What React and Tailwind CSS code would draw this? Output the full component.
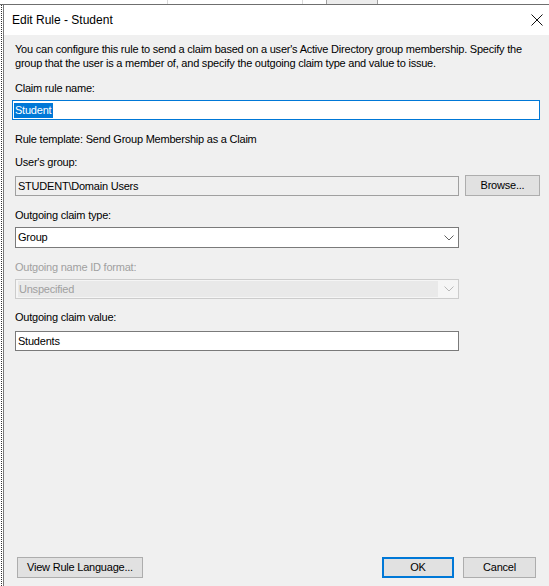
import React from "react";

const font = { fontFamily: '"Segoe UI", "Liberation Sans", Arial, sans-serif' };
const body = "text-[11px] tracking-[-0.22px]";

const Chevron = ({ color = "#606060" }) => (
  <svg width="10" height="6" viewBox="0 0 10 6" fill="none">
    <path d="M0.5 0.5 L5 5 L9.5 0.5" stroke={color} strokeWidth="1" />
  </svg>
);

const Label = ({ children, className = "", disabled }) => (
  <div
    className={`pl-[11px] text-[11px] tracking-[-0.22px] leading-[15px] ${
      disabled ? "text-[#a0a0a0]" : "text-black"
    } ${className}`}
  >
    {children}
  </div>
);

const WinButton = ({ children, className = "" }) => (
  <div
    className={`h-[21px] bg-[#e1e1e1] border border-[#adadad] flex items-center justify-center text-[11px] tracking-[-0.22px] text-black ${className}`}
  >
    {children}
  </div>
);

export default function App() {
  return (
    <div
      className="w-[549px] h-[586px] bg-white flex flex-col overflow-hidden"
      style={font}
    >
      {/* window behind, top edge */}
      <div className="h-[4px] flex shrink-0">
        <div className="w-[168px] border-r border-[#d9d9d9]" />
        <div className="w-[135px] border-r border-[#d9d9d9]" />
        <div className="w-[24px] border-r border-[#a0a0a0]" />
        <div className="w-[51px] bg-[#ececec] border-r border-[#a0a0a0]" />
        <div className="flex-1" />
      </div>
      <div className="h-px bg-[#6f6f6f] shrink-0" />

      <div className="flex flex-1 min-h-0">
        {/* left edge of window behind */}
        <div className="w-[3px] flex justify-start">
          <div className="w-px ml-px border-l border-dotted border-[#333]" />
        </div>

        {/* dialog */}
        <div className="flex-1 flex flex-col border-l border-[#7a7a7a]">
          {/* title bar */}
          <div className="h-[30px] bg-white flex items-center justify-between shrink-0">
            <span className="pl-[8px] text-[12px] text-black">Edit Rule - Student</span>
            <svg width="12" height="12" viewBox="0 0 12 12" className="mr-[6px]">
              <path d="M0.5 0.5 L11.5 11.5 M11.5 0.5 L0.5 11.5" stroke="#111" strokeWidth="1" />
            </svg>
          </div>

          {/* body */}
          <div className="flex-1 bg-[#f0f0f0] flex flex-col pt-[7px] pb-[8px]">
            <p className={`ml-[11px] w-[520px] ${body} leading-[14px] text-black`}>
              You can configure this rule to send a claim based on a user's Active Directory group
              membership. Specify the group that the user is a member of, and specify the outgoing
              claim type and value to issue.
            </p>

            <Label className="mt-[11px]">Claim rule name:</Label>
            <div className="mt-[4px] ml-[8px] w-[528px] h-[20px] bg-white border border-[#0078d7] flex items-center pl-[1px]">
              <span className={`bg-[#0078d7] text-white ${body} leading-[15px] pl-px pr-[2px]`}>
                Student
              </span>
            </div>

            <Label className="mt-[12px]">Rule template: Send Group Membership as a Claim</Label>

            <Label className="mt-[8px]">User's group:</Label>
            <div className="mt-[5px] flex items-start">
              <div className={`mt-px ml-[11px] w-[444px] h-[20px] bg-[#f0f0f0] border border-[#a0a0a0] flex items-center pl-[2px] ${body} text-black`}>
                STUDENT\Domain Users
              </div>
              <WinButton className="ml-[6px] w-[75px]">Browse...</WinButton>
            </div>

            <Label className="mt-[12px]">Outgoing claim type:</Label>
            <div className={`mt-[4px] ml-[11px] w-[444px] h-[21px] bg-white border border-[#7a7a7a] flex items-center justify-between pl-[2px] pr-[4px] ${body} text-black`}>
              <span>Group</span>
              <Chevron />
            </div>

            <Label className="mt-[12px]" disabled>
              Outgoing name ID format:
            </Label>
            <div className="mt-[4px] ml-[11px] w-[444px] h-[20px] bg-[#f5f5f5] border border-[#cccccc] flex items-center justify-between pl-[2px] pr-[4px]">
              <div className={`w-[420px] h-[16px] bg-[#e9e9e9] flex items-center pl-px ${body} text-[#a0a0a0]`}>
                Unspecified
              </div>
              <Chevron color="#b8b8b8" />
            </div>

            <Label className="mt-[11px]">Outgoing claim value:</Label>
            <div className={`mt-[6px] ml-[11px] w-[444px] h-[20px] bg-white border border-[#7a7a7a] flex items-center pl-[2px] ${body} text-black`}>
              Students
            </div>

            <div className="mt-auto flex items-center">
              <WinButton className="ml-[13px] w-[126px]">View Rule Language...</WinButton>
              <div className={`ml-auto h-[21px] w-[72px] bg-[#e1e1e1] border-2 border-[#0078d7] flex items-center justify-center ${body} text-black`}>
                OK
              </div>
              <WinButton className="ml-[9px] mr-[13px] w-[73px]">Cancel</WinButton>
            </div>
          </div>
        </div>
      </div>
    </div>
  );
}
